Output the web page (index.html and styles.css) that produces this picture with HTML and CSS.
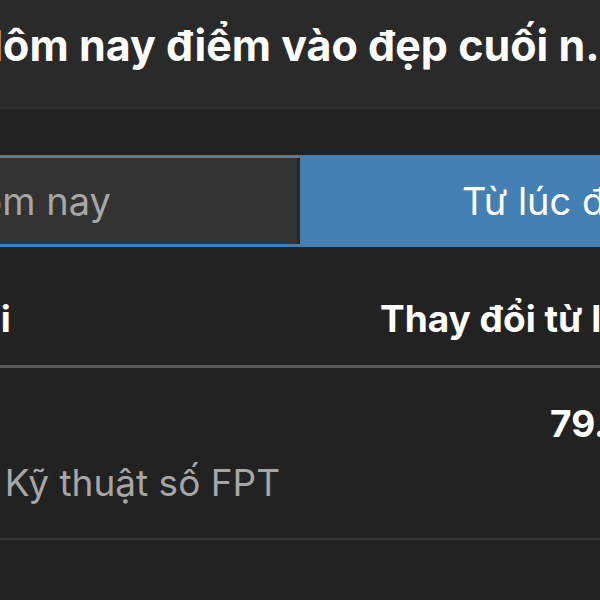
FILE: index.html
```html
<!DOCTYPE html>
<html lang="vi">
<head>
<meta charset="utf-8">
<link rel="stylesheet" href="styles.css">
</head>
<body>
<div class="screen">
  <header class="topbar">
    <h1 class="title">Hôm nay điểm vào đẹp cuối n...</h1>
  </header>
  <main class="content">
    <div class="tabs">
      <div class="tab tab-off">Hôm nay</div>
      <div class="tab tab-on">Từ lúc đặt</div>
    </div>
    <div class="table">
      <div class="thead">
        <div class="col-name">Tên gọi</div>
        <div class="col-change">Thay đổi từ lúc đặt</div>
      </div>
      <div class="row">
        <div class="col-name">
          <div class="ticker">FRT</div>
          <div class="company">CTCP Kỹ thuật số FPT</div>
        </div>
        <div class="col-change">
          <div class="value">79.500</div>
        </div>
      </div>
    </div>
  </main>
</div>
</body>
</html>
```

FILE: styles.css
```css
html, body {
  margin: 0;
  padding: 0;
  background: #222222;
  overflow: hidden;
}
body {
  width: 600px;
  height: 600px;
  font-family: "Inter", "Roboto", "Liberation Sans", sans-serif;
  color: #ffffff;
}
.screen {
  width: 600px;
  height: 600px;
  overflow: hidden;
}
.topbar {
  height: 107px;
  background: #2a2a2a;
  border-bottom: 2px solid #333333;
  display: flex;
  align-items: flex-start;
}
.title {
  margin: 20px 0 0 -29px;
  font-size: 43px;
  font-weight: 700;
  white-space: nowrap;
  line-height: 50px;
}
.content {
  padding-top: 46px;
}
.tabs {
  display: flex;
  box-sizing: border-box;
  margin-left: -238px;
  width: 1042px;
  height: 92px;
  border: 3px solid #4580b4;
  background: #4580b4;
}
.tab {
  display: flex;
  align-items: center;
  justify-content: center;
  font-size: 38px;
  white-space: nowrap;
}
.tab-off {
  box-sizing: border-box;
  flex: 0 0 535px;
  background: #333333;
  color: #a6a6a6;
  border-right: 3px solid #262626;
}
.tab-on {
  flex: 1;
  background: #4580b4;
  color: #ffffff;
}
.table {
  margin-top: 50px;
  margin-left: -115px;
  width: 1000px;
}
.thead, .row {
  display: grid;
  grid-template-columns: 495px 1fr;
  white-space: nowrap;
}
.thead {
  align-items: start;
  height: 66px;
  line-height: 44px;
  border-bottom: 3px solid #5a5a5a;
  font-size: 37px;
  font-weight: 700;
  padding-bottom: 2px;
}
.thead .col-name {
  margin-left: -6px;
}
.row {
  height: 170px;
  border-bottom: 2px solid #363636;
}
.row .col-name {
  padding-top: 38px;
}
.ticker {
  font-size: 37px;
  font-weight: 700;
  height: 48px;
}
.company {
  font-size: 37px;
  color: #a6a6a6;
  margin-top: 6px;
  margin-left: 9px;
}
.row .col-change {
  padding-top: 33px;
  padding-left: 170px;
}
.value {
  font-size: 37px;
  font-weight: 700;
}
```
